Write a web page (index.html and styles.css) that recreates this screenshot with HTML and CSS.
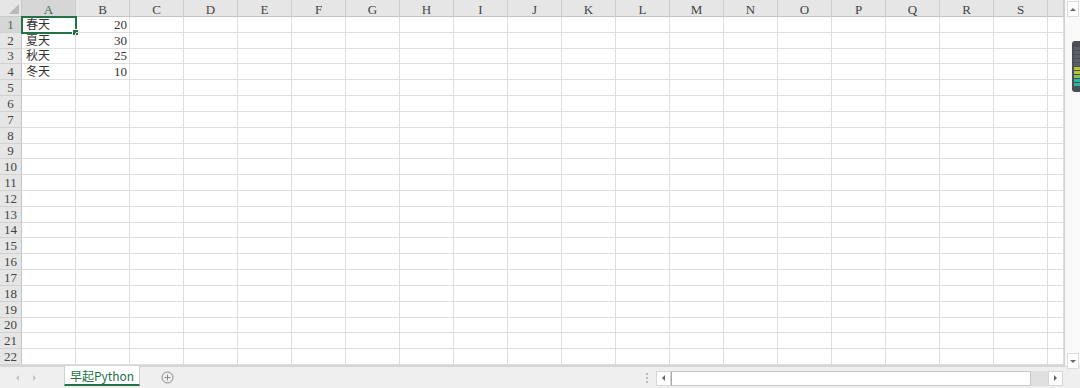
FILE: index.html
```html
<!DOCTYPE html>
<html lang="zh-CN">
<head>
    <meta charset="UTF-8">
    <title>早起Python</title>
    <link rel="stylesheet" href="styles.css">
</head>
<body>
    <div class="app">
        <div class="main">
            <div class="sheet" id="sheet"></div>
            <div class="vscroll">
                <div class="sbtn up"><span class="tri-up"></span></div>
                <div class="vtrack"></div>
                <div class="sbtn down"><span class="tri-down"></span></div>
            </div>
            <!-- 悬浮小部件 -->
            <div class="widget">
                <span></span><span></span><span></span><span></span><span></span>
                <span class="y"></span><span class="y"></span><span class="g"></span><span class="t"></span><span class="t"></span>
            </div>
        </div>
        <div class="tabbar">
            <div class="nav">
                <span class="tri-left"></span>
                <span class="tri-right"></span>
            </div>
            <div class="tab">早起Python</div>
            <div class="add">
                <svg width="13" height="13" viewBox="0 0 13 13">
                    <circle cx="6.5" cy="6.5" r="5.5" fill="none" stroke="#8a8a8a" stroke-width="1"/>
                    <path d="M6.5 3.5v6M3.5 6.5h6" stroke="#8a8a8a" stroke-width="1"/>
                </svg>
            </div>
            <div class="spacer"></div>
            <div class="dots"><i></i><i></i><i></i></div>
            <div class="hscroll">
                <div class="hbtn"><span class="tri-left dark"></span></div>
                <div class="thumb"></div>
                <div class="htrack"></div>
                <div class="hbtn"><span class="tri-right dark"></span></div>
            </div>
            <div class="corner"></div>
        </div>
    </div>

    <script>
        const sheet = document.getElementById("sheet");
        const cols = "ABCDEFGHIJKLMNOPQRS".split("");
        const data = [["春天", "20"], ["夏天", "30"], ["秋天", "25"], ["冬天", "10"]];

        function cell(cls, text) {
            const d = document.createElement("div");
            d.className = cls;
            if (text) d.textContent = text;
            sheet.appendChild(d);
            return d;
        }

        // 表头
        cell("corner-cell");
        cols.forEach((c, i) => cell(i === 0 ? "col-head active" : "col-head", c));
        cell("col-head");

        for (let r = 1; r <= 22; r++) {
            cell(r === 1 ? "row-head active" : "row-head", String(r));
            for (let c = 0; c <= cols.length; c++) {
                let text = "";
                let cls = "cell";
                if (data[r - 1] && c === 0) { text = data[r - 1][0]; cls += " txt"; }
                if (data[r - 1] && c === 1) { text = data[r - 1][1]; cls += " num"; }
                const d = cell(cls, text);
                if (r === 1 && c === 0) {
                    const sel = document.createElement("div");
                    sel.className = "selection";
                    d.appendChild(sel);
                }
            }
        }
    </script>
</body>
</html>
```

FILE: styles.css
```css
body {
    margin: 0;
    font-family: "Liberation Serif", "Noto Sans CJK SC", serif;
    background: #fff;
    overflow: hidden;
}
.app {
    width: 1080px;
    height: 388px;
    display: flex;
    flex-direction: column;
}
.main {
    position: relative;
    display: flex;
    height: 366px;
}
.sheet {
    flex: 1;
    display: grid;
    grid-template-columns: 22px repeat(19, 54px) 1fr;
    grid-template-rows: 17px repeat(22, minmax(0, 1fr));
    height: 365px;
    border-bottom: 1px solid #d6d6d6;
    overflow: hidden;
}
.corner-cell {
    position: relative;
    background: #e6e6e6;
    border-right: 1px solid #c8c8c8;
    border-bottom: 1px solid #c8c8c8;
}
.corner-cell::after {
    content: "";
    position: absolute;
    right: 2px;
    bottom: 2px;
    border-left: 10px solid transparent;
    border-bottom: 10px solid #b9b9b9;
}
.col-head {
    background: #e6e6e6;
    border-right: 1px solid #cdcdcd;
    border-bottom: 1px solid #c4c4c4;
    font-size: 13px;
    color: #444;
    text-align: center;
    line-height: 19px;
    overflow: hidden;
}
.col-head.active {
    background: #d6d6d6;
    color: #3e6b4f;
    border-bottom-color: #a9a9a9;
}
.row-head {
    min-height: 0;
    background: #e6e6e6;
    border-right: 1px solid #c4c4c4;
    border-bottom: 1px solid #d2d2d2;
    font-size: 13px;
    line-height: 14px;
    color: #444;
    display: flex;
    align-items: flex-end;
    justify-content: center;
    overflow: hidden;
}
.row-head.active {
    background: #d6d6d6;
    color: #3e6b4f;
}
.cell {
    position: relative;
    min-height: 0;
    border-right: 1px solid #dedede;
    border-bottom: 1px solid #dedede;
    font-size: 13px;
    line-height: 14px;
    color: #333;
    padding: 0 3px;
    display: flex;
    align-items: flex-end;
    white-space: nowrap;
}
.cell.txt {
    font-size: 12px;
    padding-left: 4px;
}
.cell.num {
    justify-content: flex-end;
    padding-right: 2px;
}
.selection {
    position: absolute;
    left: -1px;
    top: -1px;
    right: -2px;
    bottom: -2px;
    border: 2px solid #217346;
}
.selection::after {
    content: "";
    position: absolute;
    right: -4px;
    bottom: -4px;
    width: 5px;
    height: 5px;
    background: #217346;
    border: 1px solid #fff;
}
.vscroll {
    width: 16px;
    border-left: 1px solid #d0d0d0;
    background: #f9f9f9;
    display: flex;
    flex-direction: column;
    padding: 1px 1px 0 2px;
    box-sizing: border-box;
}
.vtrack { flex: 1; }
.sbtn {
    height: 14px;
    background: #fff;
    border: 1px solid #dcdcdc;
    display: flex;
    align-items: center;
    justify-content: center;
}
.sbtn.down { margin-bottom: -3px; }
.tri-up {
    border-left: 3px solid transparent;
    border-right: 3px solid transparent;
    border-bottom: 3px solid #6b6b6b;
}
.tri-down {
    border-left: 3px solid transparent;
    border-right: 3px solid transparent;
    border-top: 3px solid #6b6b6b;
}
.widget {
    position: absolute;
    left: 1072px;
    top: 41px;
    width: 8px;
    height: 51px;
    background: #4b5057;
    border-radius: 3px 0 0 3px;
    display: flex;
    flex-direction: column;
    gap: 1px;
    padding: 6px 0 4px 2px;
    box-sizing: border-box;
}
.widget span {
    height: 3px;
    width: 6px;
    background: #5c6168;
}
.widget span.y { background: #b7c235; }
.widget span.g { background: #7fc25c; }
.widget span.t { background: #2fb3a1; }
.tabbar {
    height: 22px;
    background: #efefef;
    border-top: 1px solid #d6d6d6;
    box-sizing: border-box;
    display: flex;
    align-items: stretch;
}
.nav {
    width: 64px;
    display: flex;
    align-items: center;
    gap: 14px;
    padding-left: 16px;
    box-sizing: border-box;
}
.tri-left {
    border-top: 3px solid transparent;
    border-bottom: 3px solid transparent;
    border-right: 3px solid #c4c4c4;
}
.tri-right {
    border-top: 3px solid transparent;
    border-bottom: 3px solid transparent;
    border-left: 3px solid #c4c4c4;
}
.tri-left.dark { border-right-color: #666; }
.tri-right.dark { border-left-color: #666; }
.tab {
    width: 76px;
    margin-top: -1px;
    margin-bottom: 2px;
    background: #fff;
    border-left: 1px solid #d0d0d0;
    border-right: 1px solid #d0d0d0;
    border-bottom: 2px solid #217346;
    color: #217346;
    font-family: "Noto Sans CJK SC", "Noto Sans", sans-serif;
    font-size: 12px;
    display: flex;
    align-items: center;
    justify-content: center;
    box-sizing: border-box;
}
.add {
    width: 55px;
    display: flex;
    align-items: center;
    justify-content: center;
}
.spacer { flex: 1; }
.dots {
    width: 18px;
    display: flex;
    flex-direction: column;
    align-items: center;
    justify-content: center;
    gap: 2px;
}
.dots i {
    width: 2px;
    height: 2px;
    background: #bdbdbd;
}
.hscroll {
    width: 407px;
    display: flex;
    align-items: center;
    margin-top: 1px;
}
.hbtn {
    width: 13px;
    height: 13px;
    background: #fff;
    border: 1px solid #d6d6d6;
    display: flex;
    align-items: center;
    justify-content: center;
}
.thumb {
    width: 358px;
    height: 13px;
    background: #fff;
    border: 1px solid #c8c8c8;
    border-left: 1px solid #aaa;
}
.htrack {
    flex: 1;
    height: 15px;
    background: #e0e0e0;
}
.corner { width: 17px; }
```
